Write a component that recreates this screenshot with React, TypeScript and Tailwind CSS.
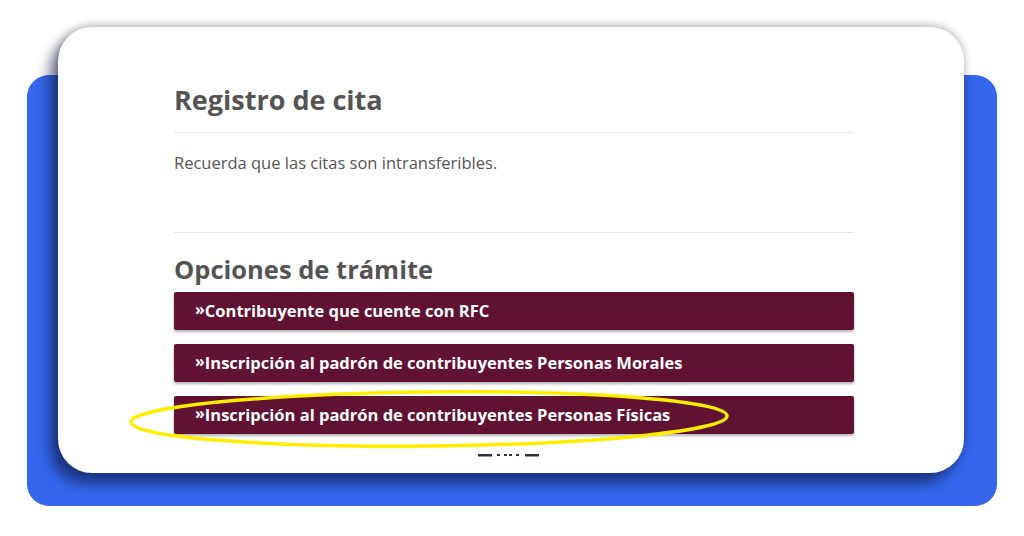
const options = [
  'Contribuyente que cuente con RFC',
  'Inscripción al padrón de contribuyentes Personas Morales',
  'Inscripción al padrón de contribuyentes Personas Físicas',
];

/** Screenshot of the appointment page, framed on a blue card with a highlight ring. */
export default function App() {
  return (
    <div
      className="relative h-[536px] w-[1024px] overflow-hidden bg-white pt-[75px]"
      style={{ fontFamily: '"Open Sans", "Liberation Sans", sans-serif' }}
    >
      <div className="mx-[27px] flow-root h-[431px] rounded-[22px] bg-[#3566ec]">
        <div className="-mt-[48px] mr-[33px] ml-[31px] h-[446px] overflow-hidden rounded-[34px] bg-white shadow-[-8px_10px_14px_rgba(10,20,60,0.6),0_-2px_8px_rgba(0,0,0,0.25)]">
          <div className="ml-[116px] w-[680px] pt-[56px]">
            <h1 className="text-[27px] leading-[34px] font-bold text-[#545454]">Registro de cita</h1>
            <hr className="mt-[15px] border-t border-[#e3e3e3]" />
            <p className="mt-[19px] text-[16.5px] leading-[22px] text-[#555]">
              Recuerda que las citas son intransferibles.
            </p>
            <hr className="mt-[58px] border-t border-[#e3e3e3]" />
            <h2 className="mt-[19px] text-[25.5px] leading-[34px] font-bold text-[#545454]">
              Opciones de trámite
            </h2>
            <div className="mt-[6px] flex flex-col gap-[14px]">
              {options.map((label) => (
                <button
                  key={label}
                  className="flex h-[38px] items-center rounded-[2px] bg-[#611232] pl-[21px] text-left text-[16.5px] font-bold text-white shadow-[0_2px_3px_rgba(0,0,0,0.3)]"
                >
                  <span className="-translate-y-[2px] text-[16px] leading-none">»</span>
                  {label}
                </button>
              ))}
            </div>
            {/* top edge of the next, cropped-off heading */}
            <svg className="mt-[19px] ml-[304px] block" width="70" height="6">
              <g fill="#3b2a30">
                <rect x="0" y="1" width="14" height="2.5" />
                <rect x="19" y="1" width="3" height="2" />
                <rect x="26" y="1" width="3" height="2" />
                <rect x="31" y="1" width="3" height="2" />
                <rect x="38" y="1" width="3" height="2" />
                <rect x="47" y="1" width="14" height="2.5" />
              </g>
            </svg>
          </div>
        </div>
      </div>

      <svg className="pointer-events-none absolute top-0 left-0" width="1024" height="536">
        <ellipse
          cx="429"
          cy="419"
          rx="298"
          ry="27"
          fill="none"
          stroke="#ffee00"
          strokeWidth="3.5"
          transform="rotate(-0.6 429 419)"
        />
      </svg>
    </div>
  );
}
